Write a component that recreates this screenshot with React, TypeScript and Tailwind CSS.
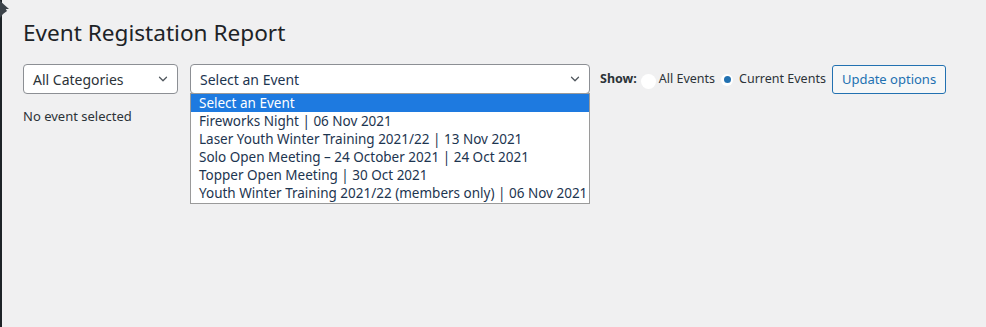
import React from 'react';

const events = [
  'Fireworks Night | 06 Nov 2021',
  'Laser Youth Winter Training 2021/22 | 13 Nov 2021',
  'Solo Open Meeting – 24 October 2021 | 24 Oct 2021',
  'Topper Open Meeting | 30 Oct 2021',
  'Youth Winter Training 2021/22 (members only) | 06 Nov 2021',
];

function Chevron() {
  return (
    <svg width="14" height="14" viewBox="0 0 20 20" className="text-[#50575e]">
      <path d="M5 7.5l5 5 5-5" fill="none" stroke="currentColor" strokeWidth="1.8" strokeLinecap="round" strokeLinejoin="round" />
    </svg>
  );
}

export default function App() {
  return (
    <div className="relative w-[986px] h-[327px] bg-[#f0f0f1] text-[#2c3338] overflow-hidden" style={{ fontFamily: '"Noto Sans", "Open Sans", sans-serif' }}>
      {/* screen edge + pointer */}
      <div className="absolute left-0 top-0 h-full w-[2px] bg-[#1d2327]" />
      <svg className="absolute left-0 top-0" width="12" height="20" viewBox="0 0 12 20">
        <path d="M0 0 L0 18 L3 14 L7 11 Z" fill="#3c434a" />
        <path d="M0 1 L9 9 L4 9 Z" fill="#3c434a" />
      </svg>

      <div className="pl-[23px] pt-[18px]">
        <h1 className="text-[22.6px] leading-[30px] font-normal text-[#1d2327]">Event Registation Report</h1>

        <div className="flex items-start mt-[16px]">
          <div className="w-[155px] h-[30px] border border-[#8c8f94] rounded-[4px] bg-white flex items-center justify-between pl-[9px] pr-[7px] text-[14px]">
            <span>All Categories</span>
            <Chevron />
          </div>

          <div className="relative ml-[12px] w-[400px]">
            <div className="h-[30px] border border-[#8c8f94] rounded-[4px] bg-white flex items-center justify-between pl-[9px] pr-[7px] text-[14px] text-[#1d3550]">
              <span>Select an Event</span>
              <Chevron />
            </div>
            <ul className="absolute left-0 top-[29px] w-full border border-[#9a9a9a] bg-white text-[13.5px] leading-[18.1px] text-[#1d3550] z-10">
              <li className="bg-[#1e7ae0] text-white pl-[8px]">Select an Event</li>
              {events.map((e) => (
                <li key={e} className="pl-[8px] whitespace-nowrap">{e}</li>
              ))}
            </ul>
          </div>

          <div className="flex items-center ml-[10px] mt-[2px] h-[27px] text-[12.5px] text-[#2c3338]">
            <span className="font-bold">Show:</span>
            <span className="ml-[4px] w-[15px] h-[15px] rounded-full bg-white mt-[4px]" />
            <span className="ml-[3px]">All Events</span>
            <span className="ml-[6px] w-[12px] h-[12px] rounded-full bg-white flex items-center justify-center">
              <span className="w-[7px] h-[7px] rounded-full bg-[#2271b1]" />
            </span>
            <span className="ml-[6px]">Current Events</span>
          </div>

          <button className="ml-[6px] mt-[1px] h-[29px] px-[9px] border border-[#2271b1] rounded-[3px] bg-[#f6f7f7] text-[#2271b1] text-[13px]">
            Update options
          </button>
        </div>

        <p className="mt-[13px] text-[13px] text-[#2c3338]">No event selected</p>
      </div>
    </div>
  );
}
